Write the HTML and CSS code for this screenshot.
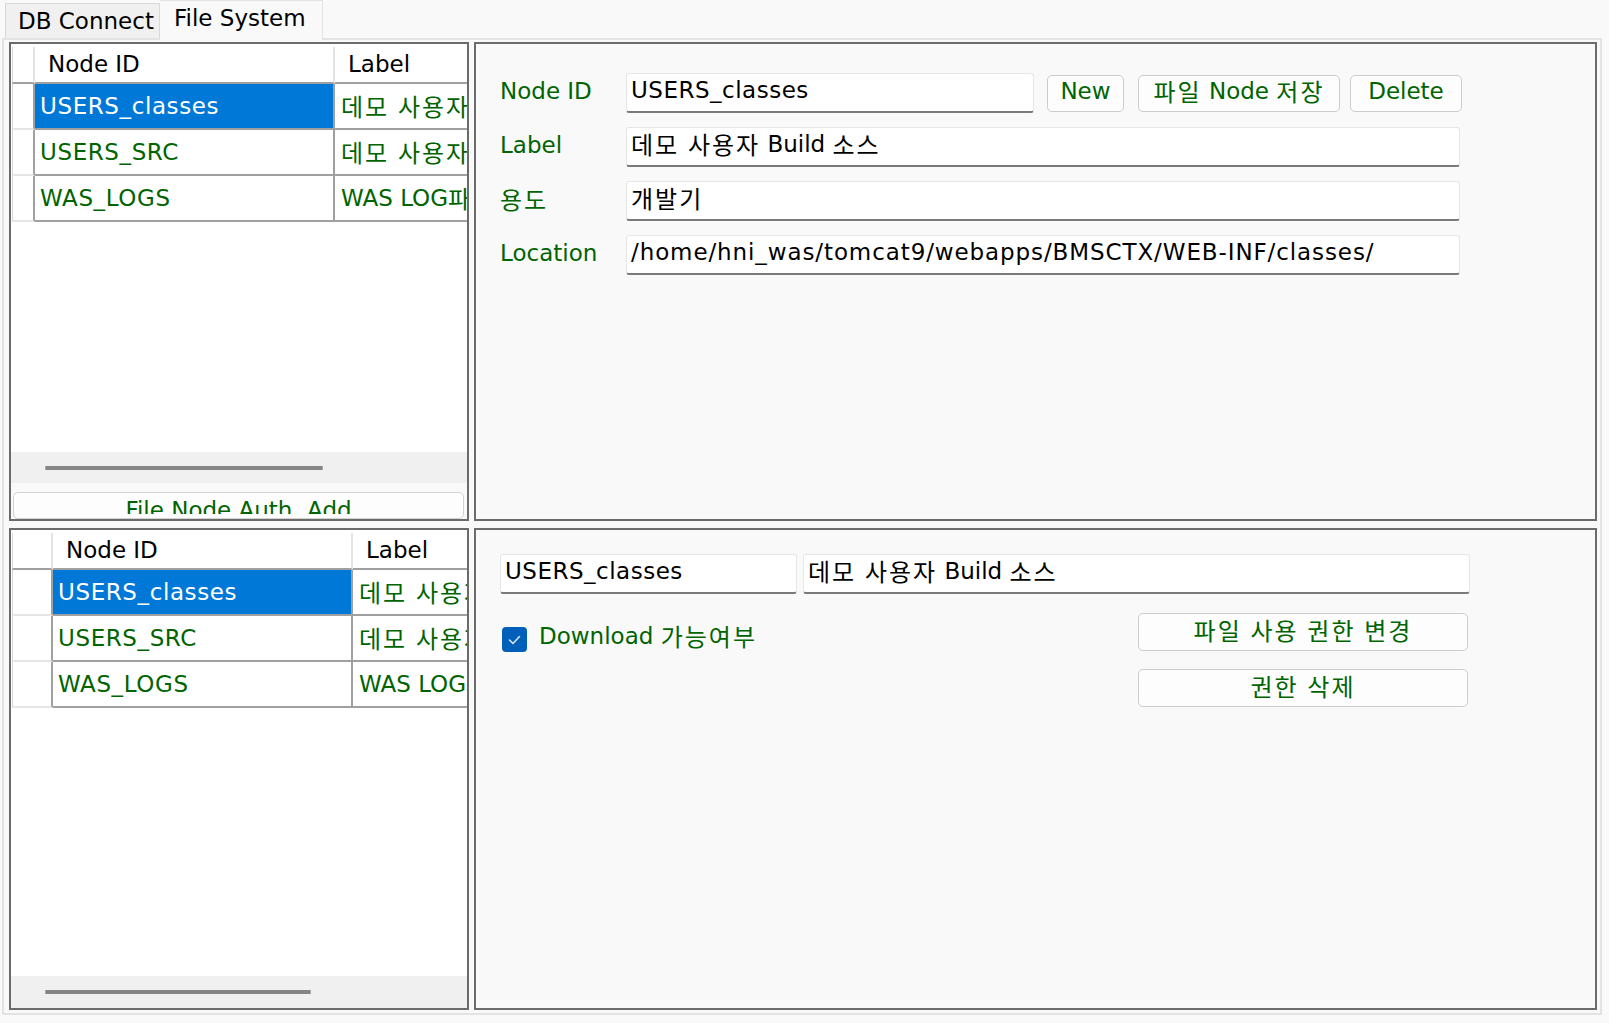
FILE: index.html
```html
<!DOCTYPE html>
<html lang="ko">
<head>
<meta charset="utf-8">
<title>File System</title>
<link rel="stylesheet" href="styles.css">
</head>
<body>
<div class="tabs">
  <div class="tab">DB Connect</div>
  <div class="tab active">File System</div>
</div>
<div class="tabpage">
  <section class="panel list-panel top-list">
    <div class="gridview">
      <div class="grid-body">
        <table class="tbl tbl-a">
          <colgroup><col class="c-rh"><col class="c-id"><col class="c-label"></colgroup>
          <thead>
            <tr><th class="corner"></th><th>Node ID</th><th>Label</th></tr>
          </thead>
          <tbody>
            <tr><td class="rh"></td><td class="sel">USERS_classes</td><td><span class="ko">데모 사용자</span> Build <span class="ko">소스</span></td></tr>
            <tr><td class="rh"></td><td>USERS_SRC</td><td><span class="ko">데모 사용자 소스</span></td></tr>
            <tr><td class="rh"></td><td>WAS_LOGS</td><td>WAS LOG<span class="ko">파일</span></td></tr>
          </tbody>
        </table>
      </div>
      <div class="hscroll"><div class="thumb thumb-a"></div></div>
    </div>
    <button class="btn btn-wide" type="button"><span class="clip">File Node Auth  Add</span></button>
  </section>

  <section class="panel form-panel">
    <div class="form-row">
      <label class="flabel">Node ID</label>
      <div class="field f-id">USERS_classes</div>
      <button class="btn b-new" type="button">New</button>
      <button class="btn b-save" type="button"><span class="ko">파일</span> Node <span class="ko">저장</span></button>
      <button class="btn b-del" type="button">Delete</button>
    </div>
    <div class="form-row">
      <label class="flabel">Label</label>
      <div class="field f-wide"><span class="ko">데모 사용자</span> Build <span class="ko">소스</span></div>
    </div>
    <div class="form-row">
      <label class="flabel"><span class="ko">용도</span></label>
      <div class="field f-wide"><span class="ko">개발기</span></div>
    </div>
    <div class="form-row">
      <label class="flabel">Location</label>
      <div class="field f-wide path">/home/hni_was/tomcat9/webapps/BMSCTX/WEB-INF/classes/</div>
    </div>
  </section>

  <section class="panel list-panel bottom-list">
    <div class="gridview">
      <div class="grid-body">
        <table class="tbl tbl-b">
          <colgroup><col class="c-rh"><col class="c-id"><col class="c-label"></colgroup>
          <thead>
            <tr><th class="corner"></th><th>Node ID</th><th>Label</th></tr>
          </thead>
          <tbody>
            <tr><td class="rh"></td><td class="sel">USERS_classes</td><td><span class="ko">데모 사용자</span> Build <span class="ko">소스</span></td></tr>
            <tr><td class="rh"></td><td>USERS_SRC</td><td><span class="ko">데모 사용자 소스</span></td></tr>
            <tr><td class="rh"></td><td>WAS_LOGS</td><td>WAS LOG<span class="ko">파일</span></td></tr>
          </tbody>
        </table>
      </div>
      <div class="hscroll"><div class="thumb thumb-b"></div></div>
    </div>
  </section>

  <section class="panel auth-panel">
    <div class="auth-row">
      <div class="field f-nid">USERS_classes</div>
      <div class="field f-nlabel"><span class="ko">데모 사용자</span> Build <span class="ko">소스</span></div>
    </div>
    <div class="auth-row2">
      <label class="check">
        <span class="box"><svg viewBox="0 0 25 25" width="25" height="25"><path d="M7.5 13 L11 16.5 L17.5 9.5" fill="none" stroke="#ffffff" stroke-opacity="0.85" stroke-width="1.6" stroke-linecap="round" stroke-linejoin="round"/></svg></span>
        <span class="check-text">Download <span class="ko">가능여부</span></span>
      </label>
      <div class="auth-btns">
        <button class="btn btn-auth" type="button"><span class="ko">파일 사용 권한 변경</span></button>
        <button class="btn btn-auth" type="button"><span class="ko">권한 삭제</span></button>
      </div>
    </div>
  </section>
</div>
</body>
</html>
```

FILE: styles.css
```css
* { box-sizing: border-box; }

html, body {
  margin: 0;
  padding: 0;
}

body {
  width: 1609px;
  height: 1023px;
  overflow: hidden;
  background: #f9f9f9;
  font-family: "DejaVu Sans", "Noto Sans CJK KR", sans-serif;
  font-size: 23px;
  color: #000;
}

.ko {
  font-family: "Noto Sans CJK KR", sans-serif;
  font-size: 24px;
  letter-spacing: 2px;
  line-height: 0;
  vertical-align: -2px;
}

/* ---------- tabs ---------- */
.tabs {
  display: flex;
  align-items: flex-end;
  height: 38px;
  padding-left: 5px;
}

.tab {
  width: 155px;
  height: 35px;
  padding-left: 12px;
  background: #f0f0f0;
  border: 1px solid #d9d9d9;
  border-bottom: none;
  line-height: 34px;
  white-space: nowrap;
}

.tab.active {
  width: 163px;
  height: 40px;
  margin-bottom: -2px;
  padding-left: 14px;
  background: #f9f9f9;
  border-left: none;
  border-color: #e3e3e3;
  line-height: 34px;
  position: relative;
  z-index: 1;
}

/* ---------- tab page ---------- */
.tabpage {
  margin-left: 2px;
  width: 1600px;
  height: 977px;
  border: 2px solid #e3e3e3;
  padding: 2px 3px 3px 5px;
  display: grid;
  grid-template-columns: 460px 1123px;
  grid-template-rows: 479px 482px;
  column-gap: 5px;
  row-gap: 7px;
}

.panel {
  border: 2px solid #6b6b6b;
  overflow: hidden;
}

/* ---------- grid lists ---------- */
.list-panel {
  background: #f9f9f9;
  display: flex;
  flex-direction: column;
}

.gridview {
  display: flex;
  flex-direction: column;
  flex: none;
}

.top-list .gridview { height: 439px; }
.bottom-list .gridview { height: 478px; }

.grid-body {
  flex: 1;
  background: #ffffff;
  padding: 3px 0 0 1px;
  overflow: hidden;
}

.hscroll {
  flex: none;
  background: #f0f0f0;
  padding-top: 14px;
}

.top-list .hscroll { height: 31px; }
.bottom-list .hscroll { height: 32px; }

.thumb {
  height: 4px;
  margin-left: 34px;
  background: #858585;
  border-left: 1px solid #a8a8a8;
  border-right: 1px solid #a8a8a8;
}

.thumb-a { width: 278px; }
.thumb-b { width: 266px; }

.tbl {
  border-collapse: separate;
  border-spacing: 0;
  table-layout: fixed;
}

.tbl-a { width: 623px; }
.tbl-b { width: 641px; }

.tbl-a .c-rh { width: 23px; }
.tbl-b .c-rh { width: 41px; }
.tbl .c-id { width: 300px; }
.tbl .c-label { width: 300px; }

.tbl th,
.tbl td {
  padding: 0;
  white-space: nowrap;
  overflow: hidden;
  text-align: left;
  font-weight: normal;
}

.tbl th {
  height: 37px;
  line-height: 33px;
  padding-left: 13px;
  color: #000;
  border-right: 2px solid #e4e4e4;
  border-bottom: 2px solid #a0a0a0;
}

.tbl th.corner {
  padding-left: 0;
  border-left: 1px solid #d6d6d6;
  border-right: 2px solid #e4e4e4;
}

.tbl td {
  height: 46px;
  line-height: 42px;
  padding-left: 5px;
  color: #006400;
  letter-spacing: 0.6px;
  border-right: 2px solid #a0a0a0;
  border-bottom: 2px solid #a0a0a0;
}

.tbl td:last-child { padding-left: 6px; letter-spacing: 0; }

.tbl td.rh {
  padding-left: 0;
  border-left: 1px solid #d6d6d6;
  border-right: 2px solid #a0a0a0;
  border-bottom: 2px solid #e6e6e6;
}

.tbl td.sel {
  background: #0078d7;
  color: #ffffff;
}

/* ---------- buttons ---------- */
.btn {
  font-family: inherit;
  font-size: inherit;
  line-height: 30px;
  color: #006400;
  background: #fdfdfd;
  border: 1px solid #cccccc;
  border-radius: 5px;
  padding: 0 0 4px 0;
  white-space: nowrap;
  flex: none;
}

.btn-wide {
  margin: 9px 0 0 2px;
  width: 451px;
  height: 27px;
  padding: 0;
  display: block;
  overflow: hidden;
  border-color: #d2d2d2;
}

.btn-wide .clip {
  display: block;
  height: 17px;
  line-height: 26px;
  overflow: hidden;
  white-space: pre;
  text-align: center;
}

/* ---------- node form ---------- */
.form-panel {
  background: #f9f9f9;
  padding: 29px 0 0 24px;
  display: flex;
  flex-direction: column;
  gap: 14px;
}

.form-row {
  display: flex;
  align-items: center;
  height: 40px;
}

.flabel {
  width: 126px;
  flex: none;
  color: #006400;
  line-height: 30px;
  padding-bottom: 4px;
}

.field {
  display: block;
  color: #000;
  height: 40px;
  line-height: 33px;
  white-space: nowrap;
  overflow: hidden;
  background: #ffffff;
  border: 1px solid #e6e6e6;
  border-bottom: 2px solid #7a7a7a;
  border-radius: 3px;
  padding: 0 0 0 4px;
  flex: none;
}

.field.path { letter-spacing: 0.9px; }

.f-id { width: 408px; letter-spacing: 0.5px; }
.f-wide { width: 834px; }

.b-new { width: 77px; height: 37px; margin-left: 13px; }
.b-save { width: 202px; height: 37px; margin-left: 14px; }
.b-del { width: 112px; height: 37px; margin-left: 10px; }

/* ---------- auth panel ---------- */
.auth-panel {
  background: #f9f9f9;
  padding: 24px 0 0 24px;
}

.auth-row {
  display: flex;
  gap: 6px;
}

.f-nid { width: 297px; letter-spacing: 0.5px; }
.f-nlabel { width: 667px; }

.auth-row2 {
  display: flex;
  justify-content: space-between;
  align-items: flex-start;
  width: 968px;
  margin-top: 19px;
}

.check {
  display: flex;
  align-items: center;
  margin-top: 11px;
  margin-left: 2px;
  color: #006400;
}

.box {
  width: 25px;
  height: 25px;
  border-radius: 4px;
  background: #005fb8;
  display: block;
  flex: none;
}

.box svg { display: block; }

.check-text {
  margin-left: 12px;
  line-height: 25px;
  padding-bottom: 5px;
}

.auth-btns {
  display: flex;
  flex-direction: column;
  gap: 18px;
  width: 330px;
}

.btn-auth {
  width: 330px;
  height: 38px;
}
```
